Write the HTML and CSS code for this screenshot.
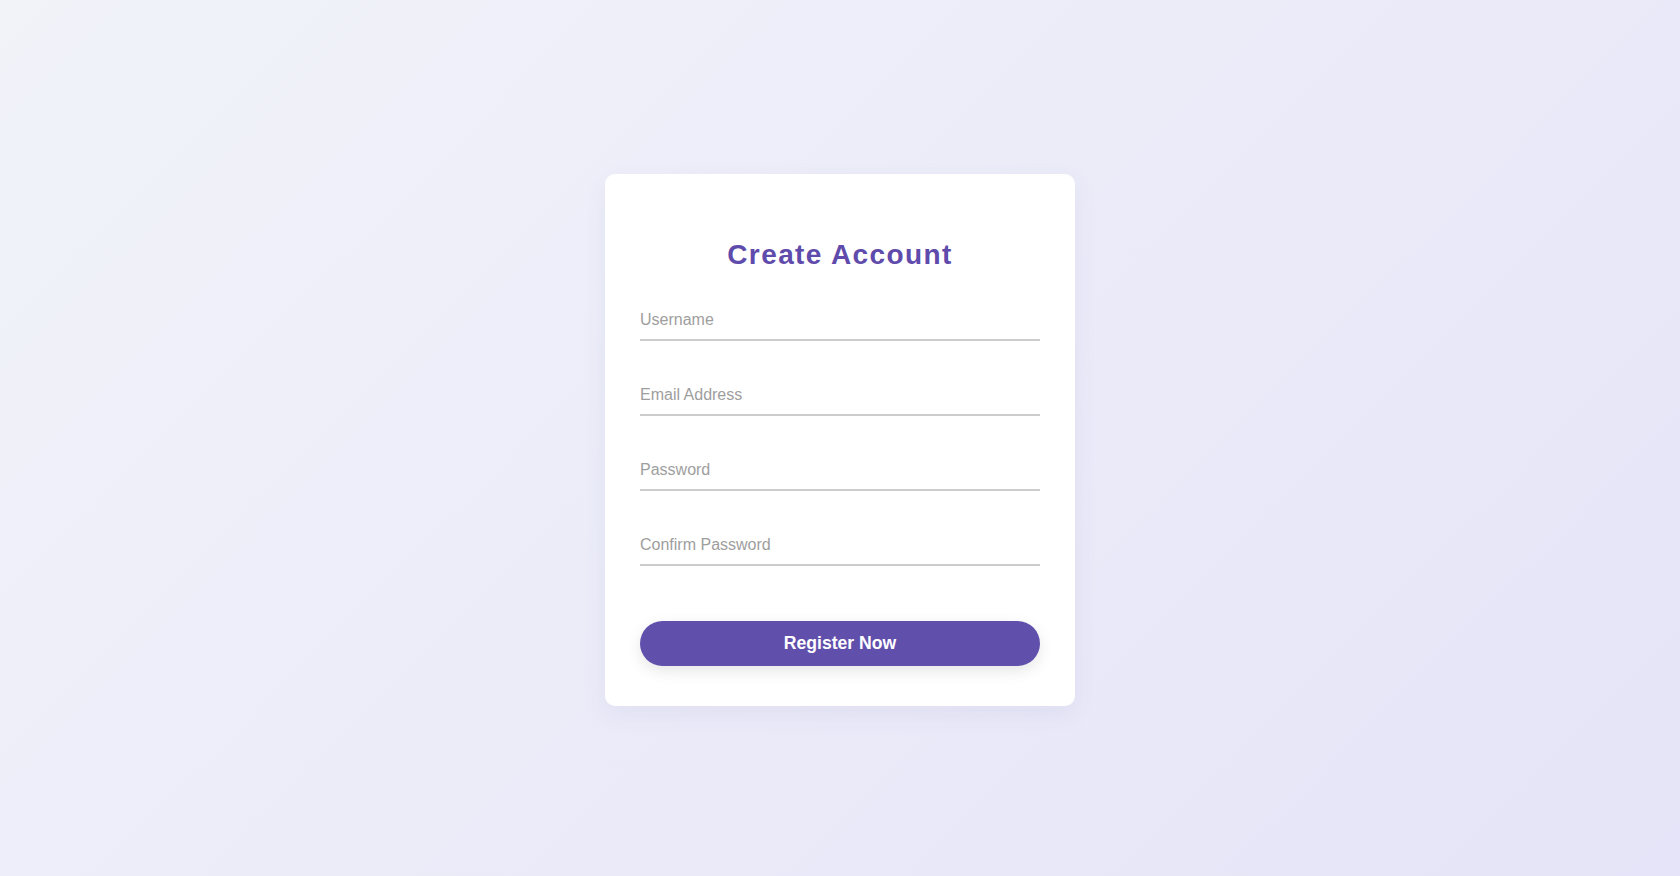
FILE: index.html
```html
<!DOCTYPE html>
<html lang="en">
<head>
  <meta charset="UTF-8">
  <title>Create Account</title>
  <link rel="stylesheet" href="styles.css">
</head>
<body>
  <form class="card" id="registerForm">
    <h2>Create Account</h2>

    <div class="field">
      <input type="text" name="username" placeholder="Username">
    </div>
    <div class="field">
      <input type="email" name="email" placeholder="Email Address">
    </div>
    <div class="field">
      <input type="password" name="password" placeholder="Password">
    </div>
    <div class="field">
      <input type="password" name="confirm" placeholder="Confirm Password">
    </div>

    <button type="submit">Register Now</button>
  </form>
</body>
</html>
```

FILE: styles.css
```css
html, body {
  height: 100%;
}
body {
  margin: 0;
  background: linear-gradient(135deg, #f1f3f9 0%, #e5e4f8 100%);
  font-family: 'Liberation Sans', Arial, sans-serif;
  display: flex;
  justify-content: center;
  align-items: center;
}
.card {
  background-color: #fff;
  width: 470px;
  padding: 40px 35px;
  border-radius: 10px;
  box-shadow: 0 8px 24px rgba(80, 80, 160, 0.07);
  box-sizing: border-box;
  margin-top: 4px;
}
h2 {
  margin: 25px 0 30px;
  text-align: center;
  font-size: 28px;
  letter-spacing: 1.4px;
  color: #5f4bab;
}
.field {
  margin-bottom: 35px;
}
input {
  display: block;
  width: 100%;
  box-sizing: border-box;
  border: none;
  border-bottom: 2px solid #ccc;
  background: transparent;
  padding: 10px 0;
  font-family: inherit;
  font-size: 16px;
  color: #333;
}
input::placeholder {
  color: #9e9e9e;
}
input:focus {
  outline: none;
  border-bottom-color: #614fac;
}
button {
  display: block;
  width: 100%;
  height: 45px;
  margin-top: 55px;
  border: none;
  border-radius: 25px;
  background-color: #614fac;
  color: #fff;
  font-family: inherit;
  font-size: 17.6px;
  font-weight: bold;
  cursor: pointer;
  box-shadow: 0 5px 15px rgba(0, 0, 0, 0.1);
}
button:hover {
  background-color: #54439a;
}
```
